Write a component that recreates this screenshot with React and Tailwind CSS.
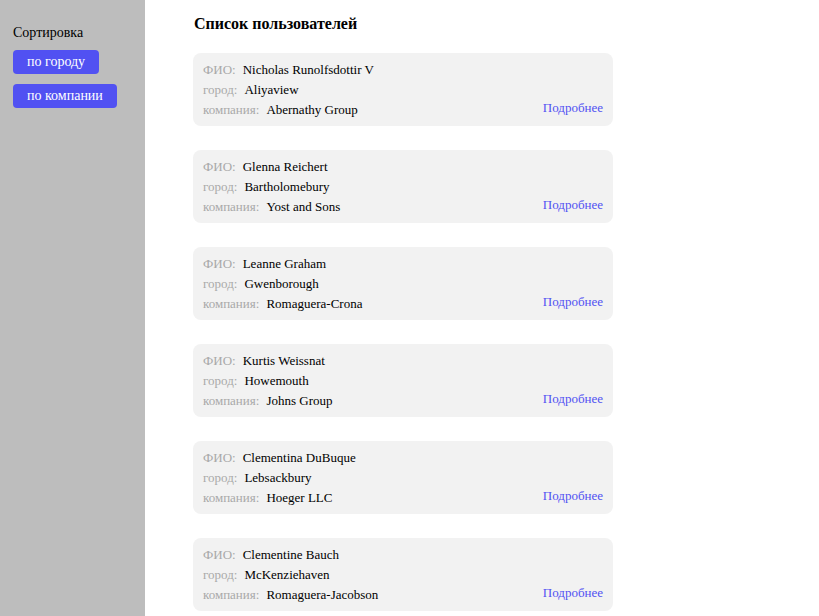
import React from "react";

const users = [
  { name: "Nicholas Runolfsdottir V", city: "Aliyaview", company: "Abernathy Group" },
  { name: "Glenna Reichert", city: "Bartholomebury", company: "Yost and Sons" },
  { name: "Leanne Graham", city: "Gwenborough", company: "Romaguera-Crona" },
  { name: "Kurtis Weissnat", city: "Howemouth", company: "Johns Group" },
  { name: "Clementina DuBuque", city: "Lebsackbury", company: "Hoeger LLC" },
  { name: "Clementine Bauch", city: "McKenziehaven", company: "Romaguera-Jacobson" },
];

function Row({ label, value }) {
  return (
    <div className="flex h-[20px] items-center">
      <span className="text-[#a9a9a9] mr-[7px]">{label}</span>
      <span className="text-black">{value}</span>
    </div>
  );
}

export default function App() {
  return (
    <div className="flex min-h-screen text-[13px] leading-[20px]" style={{ fontFamily: '"Liberation Serif", "Times New Roman", serif' }}>
      <aside className="w-[145px] shrink-0 bg-[#bdbdbd] pl-[13px] pt-[23px]">
        <div className="text-[14px] text-black mb-[7px]">Сортировка</div>
        <div className="flex flex-col items-start gap-[10px]">
          <button className="h-[24px] px-[14px] rounded-[4px] bg-[#5151f2] text-white text-[14px]">по городу</button>
          <button className="h-[24px] px-[14px] rounded-[4px] bg-[#5151f2] text-white text-[14px]">по компании</button>
        </div>
      </aside>
      <main className="pl-[48px] pt-[14px]">
        <h3 className="text-[16px] font-bold leading-[20px] ml-[1px] mb-[19px] text-black">Список пользователей</h3>
        <div className="flex flex-col gap-[24px]">
          {users.map((u) => (
            <div key={u.name} className="w-[420px] bg-[#f2f2f2] rounded-[8px] pl-[10px] pr-[10px] pt-[7px] pb-[6px] flex items-end justify-between">
              <div>
                <Row label="ФИО:" value={u.name} />
                <Row label="город:" value={u.city} />
                <Row label="компания:" value={u.company} />
              </div>
              <button className="text-[#5151f2] leading-[18px] mb-[3px]">Подробнее</button>
            </div>
          ))}
        </div>
      </main>
    </div>
  );
}
